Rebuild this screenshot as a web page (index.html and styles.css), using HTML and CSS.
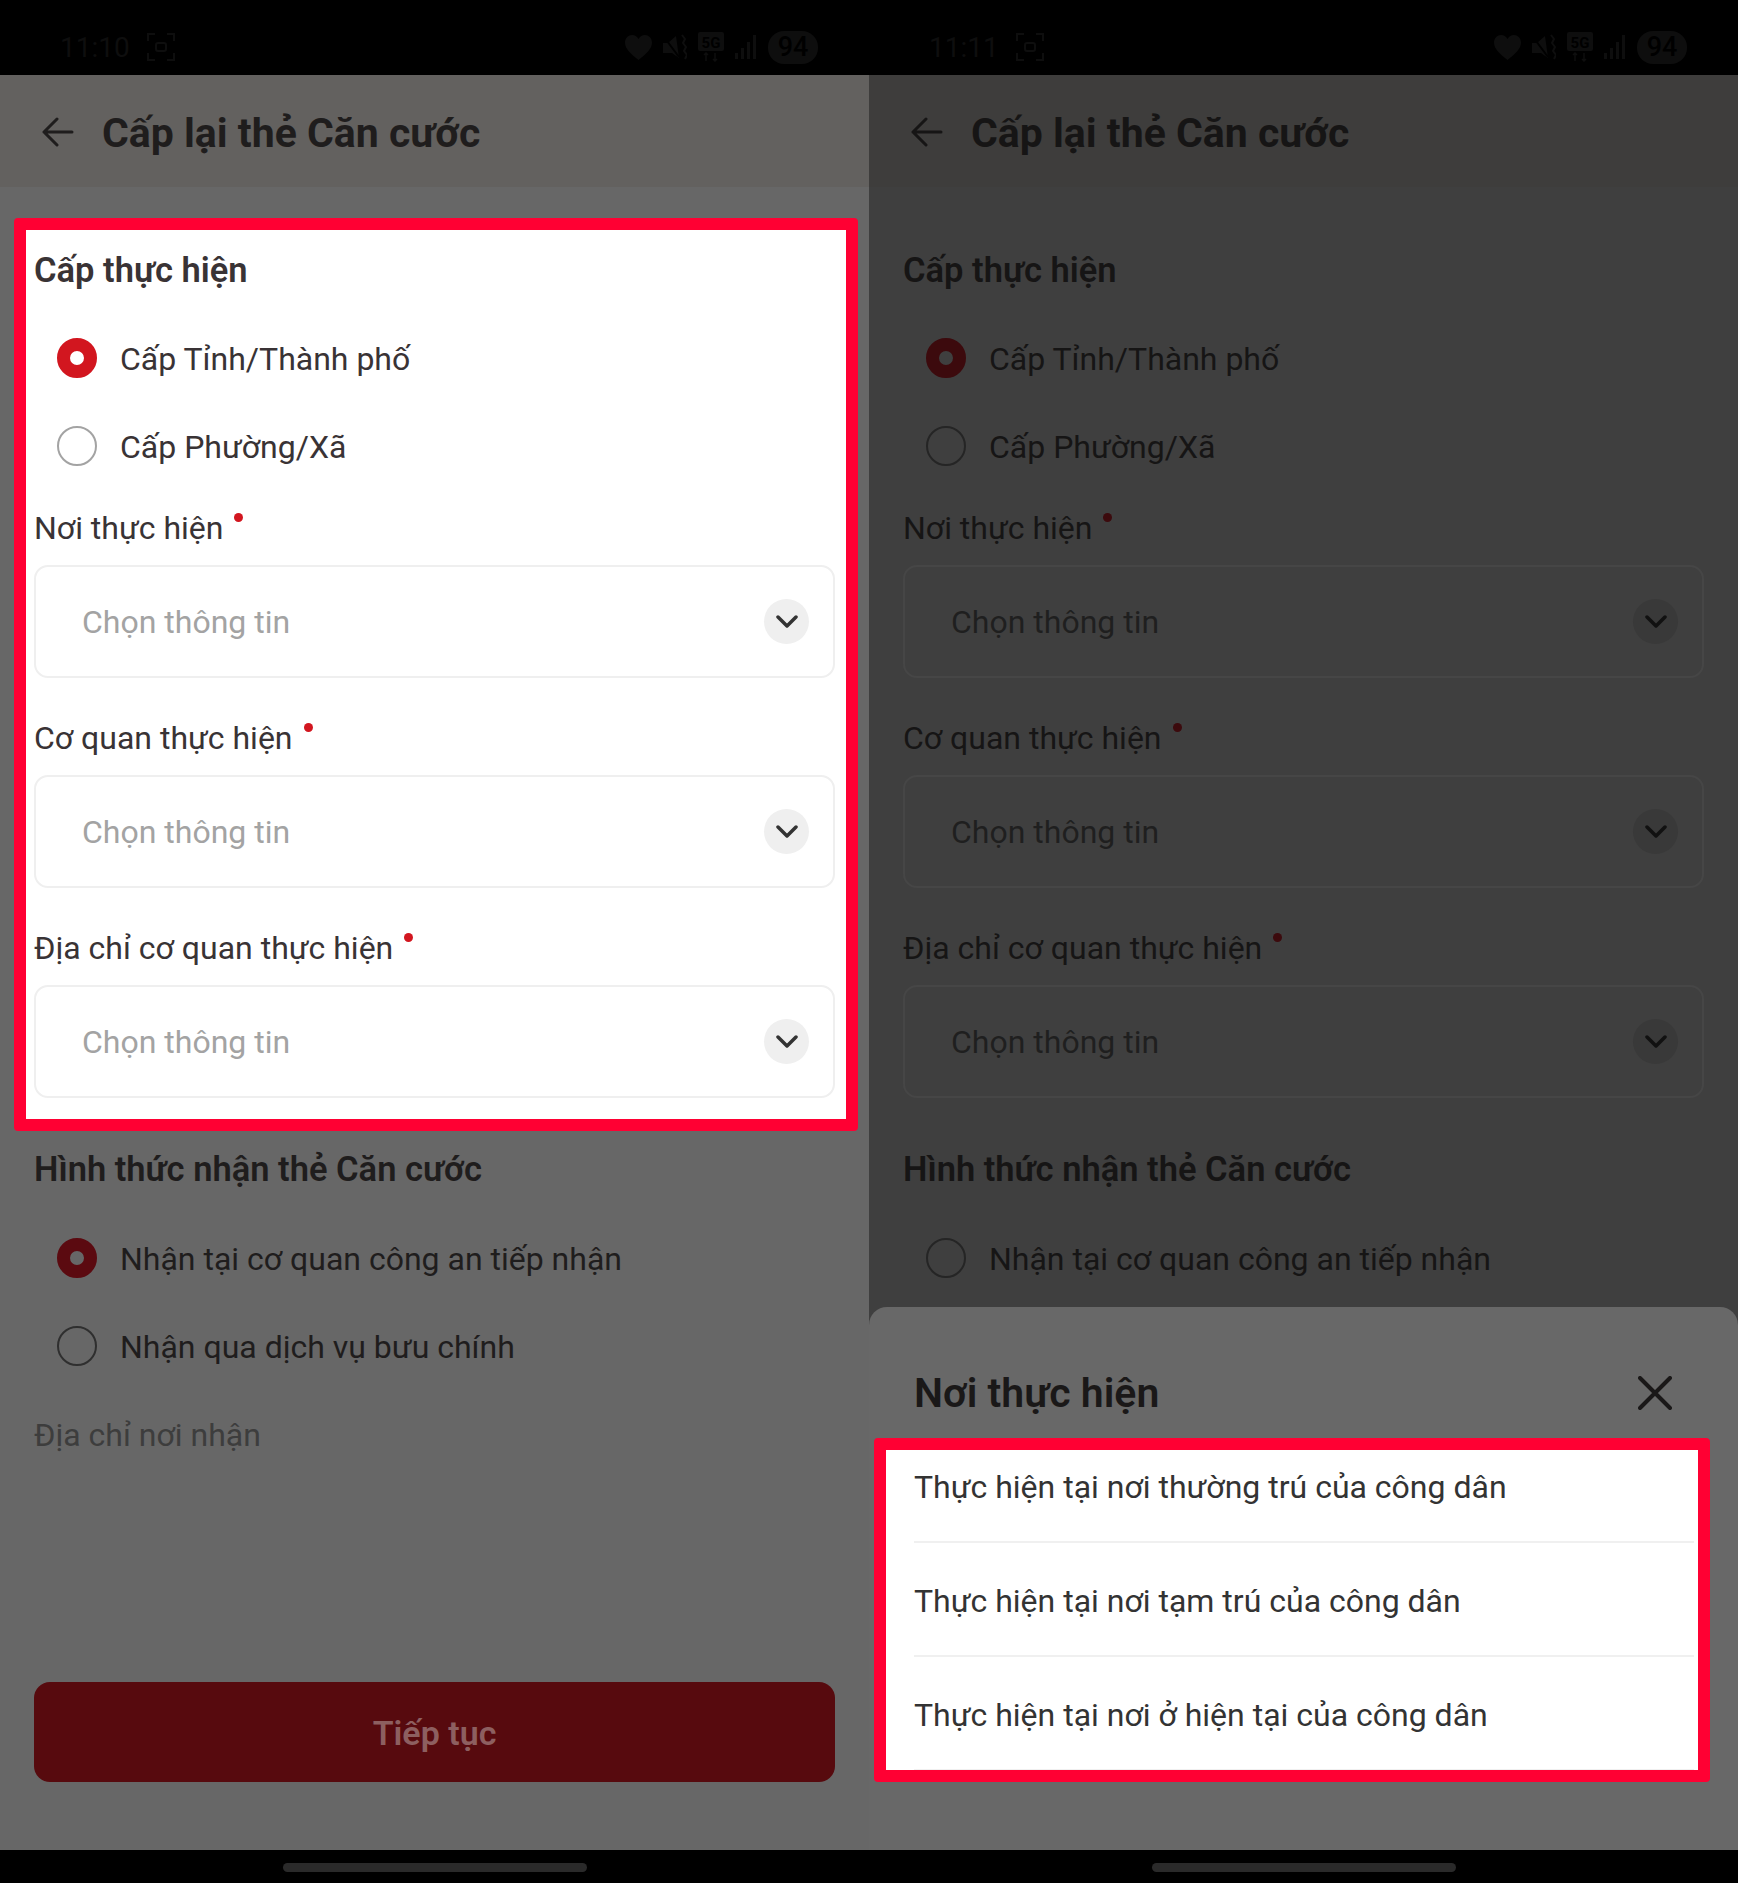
FILE: index.html
```html
<!DOCTYPE html>
<html lang="vi">

<head>
    <meta charset="UTF-8">
    <title>Cấp lại thẻ Căn cước</title>
    <link rel="stylesheet" href="styles.css">
</head>

<body>
    <div class="screens">

        <!-- left phone -->
        <div class="phone phone-left">
            <div class="status-bar">
                <div class="status-left">
                    <span class="clock">11:10</span>
                    <svg class="capture" width="28" height="28" viewBox="0 0 28 28" fill="none" stroke="currentColor" stroke-width="2">
                        <path d="M1 8V1h7M20 1h7v7M27 20v7h-7M8 27H1v-7" />
                        <rect x="9" y="10" width="10" height="8" rx="2" />
                    </svg>
                </div>
                <div class="status-right">
                    <svg width="27" height="25" viewBox="0 0 27 25" fill="currentColor">
                        <path d="M13.5 25C6 19 0 14 0 7.500C0 3 3.500 0 7 0c2.700 0 5 1.300 6.500 4C15 1.300 17.300 0 20 0c3.500 0 7 3 7 7.500C27 14 21 19 13.500 25z" />
                    </svg>
                    <svg width="24" height="28" viewBox="0 0 24 28" fill="currentColor">
                        <path d="M0 10h5l8-7 3 22-7-5H0z" />
                        <path d="M1 4l15 20" fill="none" stroke="#000000" stroke-width="2" />
                        <path d="M19 2l3 4-2 4 3 4-2 4 3 4-2 4" fill="none" stroke="currentColor" stroke-width="2" />
                    </svg>
                    <svg width="26" height="30" viewBox="0 0 26 30">
                        <rect width="26" height="19" rx="2" fill="currentColor" />
                        <text x="13" y="15.500" class="net-label">5G</text>
                        <path d="M8 21v8M6 23l2-2 2 2M17 29v-8M15 27l2 2 2-2" fill="none" stroke="currentColor" stroke-width="1.500" />
                    </svg>
                    <svg width="22" height="24" viewBox="0 0 22 24" fill="currentColor">
                        <rect x="0" y="18" width="3" height="6" />
                        <rect x="6" y="13" width="3" height="11" />
                        <rect x="12" y="7" width="3" height="17" />
                        <rect x="18" y="0" width="3" height="24" />
                    </svg>
                    <span class="battery">94</span>
                </div>
            </div>
            <div class="app-bar">
                <svg class="back" width="32" height="30" viewBox="0 0 32 30" fill="none" stroke="currentColor" stroke-width="3" stroke-linecap="round" stroke-linejoin="round">
                    <path d="M30 15H2M15 2L2 15l13 13" />
                </svg>
                <span class="app-title">Cấp lại thẻ Căn cước</span>
            </div>
            <div class="content">
                <div class="block block-hl">
                    <h3 class="group-title">Cấp thực hiện</h3>
                    <div class="radios">
                        <div class="radio-row"><span class="radio on"></span><span class="radio-text">Cấp Tỉnh/Thành phố</span></div>
                        <div class="radio-row"><span class="radio"></span><span class="radio-text">Cấp Phường/Xã</span></div>
                    </div>
                    <div class="field-label">Nơi thực hiện<span class="req"></span></div>
                    <div class="select">
                        <span>Chọn thông tin</span>
                        <span class="chev"><svg width="22" height="14" viewBox="0 0 22 14" fill="none" stroke="currentColor" stroke-width="3.500" stroke-linecap="round" stroke-linejoin="round"><path d="M2 2l9 9 9-9" /></svg></span>
                    </div>
                    <div class="field-label">Cơ quan thực hiện<span class="req"></span></div>
                    <div class="select">
                        <span>Chọn thông tin</span>
                        <span class="chev"><svg width="22" height="14" viewBox="0 0 22 14" fill="none" stroke="currentColor" stroke-width="3.500" stroke-linecap="round" stroke-linejoin="round"><path d="M2 2l9 9 9-9" /></svg></span>
                    </div>
                    <div class="field-label">Địa chỉ cơ quan thực hiện<span class="req"></span></div>
                    <div class="select">
                        <span>Chọn thông tin</span>
                        <span class="chev"><svg width="22" height="14" viewBox="0 0 22 14" fill="none" stroke="currentColor" stroke-width="3.500" stroke-linecap="round" stroke-linejoin="round"><path d="M2 2l9 9 9-9" /></svg></span>
                    </div>
                </div>
                <div class="block-plain">
                    <h3 class="group-title">Hình thức nhận thẻ Căn cước</h3>
                    <div class="radios">
                        <div class="radio-row"><span class="radio on"></span><span class="radio-text">Nhận tại cơ quan công an tiếp nhận</span></div>
                        <div class="radio-row"><span class="radio"></span><span class="radio-text">Nhận qua dịch vụ bưu chính</span></div>
                    </div>
                    <div class="address-label">Địa chỉ nơi nhận</div>
                </div>
                <button class="next-btn">Tiếp tục</button>
            </div>
            <div class="home-bar"><span class="home-pill"></span></div>
        </div>

        <!-- right phone -->
        <div class="phone phone-right">
            <div class="status-bar">
                <div class="status-left">
                    <span class="clock">11:11</span>
                    <svg class="capture" width="28" height="28" viewBox="0 0 28 28" fill="none" stroke="currentColor" stroke-width="2">
                        <path d="M1 8V1h7M20 1h7v7M27 20v7h-7M8 27H1v-7" />
                        <rect x="9" y="10" width="10" height="8" rx="2" />
                    </svg>
                </div>
                <div class="status-right">
                    <svg width="27" height="25" viewBox="0 0 27 25" fill="currentColor">
                        <path d="M13.5 25C6 19 0 14 0 7.500C0 3 3.500 0 7 0c2.700 0 5 1.300 6.500 4C15 1.300 17.300 0 20 0c3.500 0 7 3 7 7.500C27 14 21 19 13.500 25z" />
                    </svg>
                    <svg width="24" height="28" viewBox="0 0 24 28" fill="currentColor">
                        <path d="M0 10h5l8-7 3 22-7-5H0z" />
                        <path d="M1 4l15 20" fill="none" stroke="#000000" stroke-width="2" />
                        <path d="M19 2l3 4-2 4 3 4-2 4 3 4-2 4" fill="none" stroke="currentColor" stroke-width="2" />
                    </svg>
                    <svg width="26" height="30" viewBox="0 0 26 30">
                        <rect width="26" height="19" rx="2" fill="currentColor" />
                        <text x="13" y="15.500" class="net-label">5G</text>
                        <path d="M8 21v8M6 23l2-2 2 2M17 29v-8M15 27l2 2 2-2" fill="none" stroke="currentColor" stroke-width="1.500" />
                    </svg>
                    <svg width="22" height="24" viewBox="0 0 22 24" fill="currentColor">
                        <rect x="0" y="18" width="3" height="6" />
                        <rect x="6" y="13" width="3" height="11" />
                        <rect x="12" y="7" width="3" height="17" />
                        <rect x="18" y="0" width="3" height="24" />
                    </svg>
                    <span class="battery">94</span>
                </div>
            </div>
            <div class="app-bar">
                <svg class="back" width="32" height="30" viewBox="0 0 32 30" fill="none" stroke="currentColor" stroke-width="3" stroke-linecap="round" stroke-linejoin="round">
                    <path d="M30 15H2M15 2L2 15l13 13" />
                </svg>
                <span class="app-title">Cấp lại thẻ Căn cước</span>
            </div>
            <div class="content">
                <div class="block">
                    <h3 class="group-title">Cấp thực hiện</h3>
                    <div class="radios">
                        <div class="radio-row"><span class="radio on"></span><span class="radio-text">Cấp Tỉnh/Thành phố</span></div>
                        <div class="radio-row"><span class="radio"></span><span class="radio-text">Cấp Phường/Xã</span></div>
                    </div>
                    <div class="field-label">Nơi thực hiện<span class="req"></span></div>
                    <div class="select">
                        <span>Chọn thông tin</span>
                        <span class="chev"><svg width="22" height="14" viewBox="0 0 22 14" fill="none" stroke="currentColor" stroke-width="3.500" stroke-linecap="round" stroke-linejoin="round"><path d="M2 2l9 9 9-9" /></svg></span>
                    </div>
                    <div class="field-label">Cơ quan thực hiện<span class="req"></span></div>
                    <div class="select">
                        <span>Chọn thông tin</span>
                        <span class="chev"><svg width="22" height="14" viewBox="0 0 22 14" fill="none" stroke="currentColor" stroke-width="3.500" stroke-linecap="round" stroke-linejoin="round"><path d="M2 2l9 9 9-9" /></svg></span>
                    </div>
                    <div class="field-label">Địa chỉ cơ quan thực hiện<span class="req"></span></div>
                    <div class="select">
                        <span>Chọn thông tin</span>
                        <span class="chev"><svg width="22" height="14" viewBox="0 0 22 14" fill="none" stroke="currentColor" stroke-width="3.500" stroke-linecap="round" stroke-linejoin="round"><path d="M2 2l9 9 9-9" /></svg></span>
                    </div>
                </div>
                <div class="block-plain">
                    <h3 class="group-title">Hình thức nhận thẻ Căn cước</h3>
                    <div class="radios">
                        <div class="radio-row"><span class="radio"></span><span class="radio-text">Nhận tại cơ quan công an tiếp nhận</span></div>
                    </div>
                </div>
            </div>
            <div class="home-bar"><span class="home-pill"></span></div>

            <div class="sheet">
                <div class="sheet-head">
                    <span class="sheet-title">Nơi thực hiện</span>
                    <svg width="34" height="34" viewBox="0 0 34 34" fill="none" stroke="currentColor" stroke-width="4" stroke-linecap="round">
                        <path d="M2 2l30 30M32 2L2 32" />
                    </svg>
                </div>
                <div class="sheet-list">
                    <div class="sheet-item">Thực hiện tại nơi thường trú của công dân</div>
                    <div class="sheet-item">Thực hiện tại nơi tạm trú của công dân</div>
                    <div class="sheet-item">Thực hiện tại nơi ở hiện tại của công dân</div>
                </div>
            </div>
        </div>

    </div>
</body>

</html>
```

FILE: styles.css
```css
/* CSS styles */
* {
    box-sizing: border-box;
}

body {
    margin: 0;
    padding: 0;
    background-color: #000000;
    font-family: Roboto, sans-serif;
}

.screens {
    display: flex;
    width: 1738px;
    height: 1883px;
}

.phone {
    position: relative;
    display: flex;
    flex-direction: column;
    width: 869px;
    height: 1883px;
    overflow: hidden;
}

/* dimmed colours of each phone */
.phone-left {
    color: #1f1d1d;
    background-color: #676767;
}

.phone-right {
    color: #161515;
    background-color: #3f3f3f;
}

/* status bar */
.status-bar {
    display: flex;
    justify-content: space-between;
    align-items: center;
    height: 75px;
    padding: 19px 51px 0 60px;
    background-color: #000000;
    color: #0e0e0e;
}

.status-left,
.status-right {
    display: flex;
    align-items: center;
}

.clock {
    width: 87px;
    font-size: 28px;
}

.status-right {
    gap: 11px;
}

.net-label {
    fill: #000000;
    font-family: Roboto, sans-serif;
    font-size: 15px;
    font-weight: 700;
    text-anchor: middle;
}

.battery {
    width: 50px;
    height: 33px;
    border-radius: 16px;
    background-color: #0e0e0e;
    color: #000000;
    font-size: 27px;
    font-weight: 500;
    line-height: 33px;
    text-align: center;
}

/* app bar */
.app-bar {
    display: flex;
    align-items: center;
    gap: 28px;
    height: 112px;
    padding-left: 42px;
}

.back {
    margin-top: 1px;
}

.phone-left .app-bar {
    background-color: #63615f;
}

.phone-right .app-bar {
    background-color: #3e3d3c;
}

.app-title {
    margin-top: 3px;
    font-size: 41px;
    font-weight: 700;
    line-height: 48px;
}

/* form content */
.content {
    flex: 1;
    display: flex;
    flex-direction: column;
    min-height: 0;
}

.block {
    margin: 31px 11px 0 14px;
    padding: 20px 11px 21px 8px;
    border: 12px solid transparent;
}

.block-hl {
    border-color: #ff0033;
    border-radius: 4px;
    background-color: #ffffff;
    background-clip: padding-box;
    color: #393335;
}

.block-plain {
    padding: 18px 34px 0;
}

.group-title {
    margin: 0;
    font-size: 34.5px;
    font-weight: 600;
    line-height: 40px;
}

.radios {
    margin-top: 24px;
}

.block-plain .radios {
    margin-top: 25px;
}

.radio-row {
    display: flex;
    align-items: center;
    gap: 23px;
    height: 88px;
    padding-left: 23px;
    font-size: 32px;
}

.radio-text {
    margin-top: 2px;
}

.radio {
    width: 40px;
    height: 40px;
    border: 2px solid #2f2f2f;
    border-radius: 50%;
}

.radio.on {
    border: 13px solid #5b0a10;
    background-color: #676767;
}

.phone-right .radio {
    border-color: #252525;
}

.phone-right .radio.on {
    border-color: #3c0a0d;
    background-color: #3f3f3f;
}

.block-hl .radio {
    border-color: #a3a3a3;
}

.block-hl .radio.on {
    border-color: #d2161f;
    background-color: #ffffff;
}

.field-label {
    margin-top: 40px;
    font-size: 32px;
    line-height: 40px;
}

.radios + .field-label {
    margin-top: 18px;
}

.req {
    display: inline-block;
    width: 9px;
    height: 9px;
    margin-left: 11px;
    border-radius: 50%;
    background-color: #5b0a10;
    vertical-align: 17px;
}

.phone-right .req {
    background-color: #3c0a0d;
}

.block-hl .req {
    background-color: #d2161f;
}

.select {
    display: flex;
    justify-content: space-between;
    align-items: center;
    height: 113px;
    margin-top: 17px;
    padding: 0 24px 0 46px;
    border: 2px solid #464646;
    border-radius: 14px;
    font-size: 32px;
    color: #1f1f1f;
}

.block-hl .select {
    border-color: #efefef;
    color: #a3a3a3;
}

.chev {
    display: flex;
    justify-content: center;
    align-items: center;
    width: 45px;
    height: 45px;
    border-radius: 50%;
    background-color: #393939;
    color: #111111;
}

.block-hl .chev {
    background-color: #efefef;
    color: #333333;
}

.address-label {
    margin-top: 25px;
    font-size: 32px;
    line-height: 40px;
    color: #3d3d3d;
}

.next-btn {
    height: 100px;
    margin: auto 34px 68px;
    padding-top: 3px;
    border: none;
    border-radius: 16px;
    background-color: #570a0e;
    color: #8d5f60;
    font-family: Roboto, sans-serif;
    font-size: 34px;
    font-weight: 600;
}

/* bottom navigation */
.home-bar {
    display: flex;
    justify-content: center;
    height: 33px;
    padding-top: 13px;
    background-color: #000000;
}

.home-pill {
    width: 304px;
    height: 9px;
    border-radius: 5px;
    background-color: #2a2a2a;
}

/* bottom sheet */
.sheet {
    position: absolute;
    left: 0;
    right: 0;
    bottom: 33px;
    height: 543px;
    padding-top: 66px;
    border-radius: 18px 18px 0 0;
    background-color: #686868;
    color: #1a1818;
}

.sheet-head {
    display: flex;
    justify-content: space-between;
    align-items: center;
    padding: 0 66px 0 45px;
}

.sheet-title {
    font-size: 41px;
    font-weight: 600;
    line-height: 40px;
}

.sheet-list {
    height: 344px;
    margin: 25px 28px 0 5px;
    padding-left: 28px;
    padding-right: 4px;
    border: 12px solid #ff0033;
    border-radius: 4px;
    background-color: #ffffff;
    background-clip: padding-box;
    color: #333333;
    overflow: hidden;
}

.sheet-item {
    padding: 38px 0 34px;
    border-bottom: 2px solid #f0f0f0;
    font-size: 32px;
    line-height: 40px;
}

.sheet-item:first-child {
    padding-top: 17px;
}
```
